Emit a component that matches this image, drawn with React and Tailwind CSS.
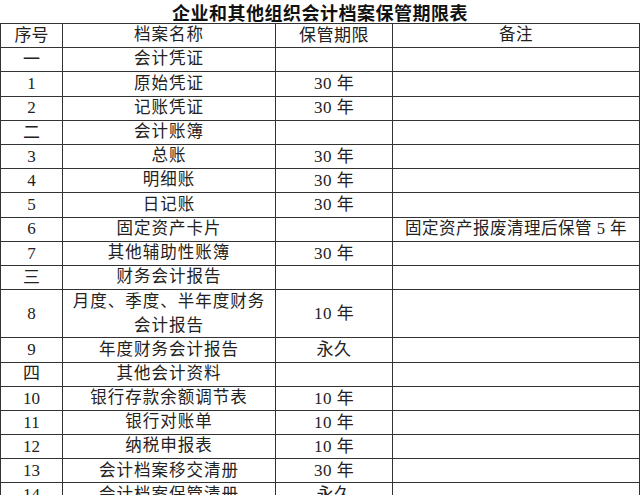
const rows = [
  { no: "序号", name: "档案名称", term: "保管期限", note: "备注" },
  { no: "一", name: "会计凭证", term: "", note: "" },
  { no: "1", name: "原始凭证", term: "30 年", note: "" },
  { no: "2", name: "记账凭证", term: "30 年", note: "" },
  { no: "二", name: "会计账簿", term: "", note: "" },
  { no: "3", name: "总账", term: "30 年", note: "" },
  { no: "4", name: "明细账", term: "30 年", note: "" },
  { no: "5", name: "日记账", term: "30 年", note: "" },
  { no: "6", name: "固定资产卡片", term: "", note: "固定资产报废清理后保管 5 年" },
  { no: "7", name: "其他辅助性账簿", term: "30 年", note: "" },
  { no: "三", name: "财务会计报告", term: "", note: "" },
  { no: "8", name: "月度、季度、半年度财务会计报告", term: "10 年", note: "", tall: true },
  { no: "9", name: "年度财务会计报告", term: "永久", note: "" },
  { no: "四", name: "其他会计资料", term: "", note: "" },
  { no: "10", name: "银行存款余额调节表", term: "10 年", note: "" },
  { no: "11", name: "银行对账单", term: "10 年", note: "" },
  { no: "12", name: "纳税申报表", term: "10 年", note: "" },
  { no: "13", name: "会计档案移交清册", term: "30 年", note: "" },
  { no: "14", name: "会计档案保管清册", term: "永久", note: "" },
  { no: "15", name: "会计档案销毁清册", term: "永久", note: "" },
];

export default function App() {
  return (
    <div className="w-[640px] h-[495px] overflow-hidden bg-white text-[#222] font-['Liberation_Serif','Noto_Sans_CJK_SC',serif]">
      <h1 className="h-[23px] flex items-center justify-center text-[18px] font-bold leading-none tracking-[0.5px] text-[#111] font-['Noto_Sans_CJK_SC',sans-serif]">
        企业和其他组织会计档案保管期限表
      </h1>
      <div className="grid grid-cols-[62px_213px_117px_247px] border-t border-l border-[#333] w-[640px]">
        {rows.map((r, i) => (
          <div key={i} className="contents">
            <div className={`${r.tall ? "h-[48.3px]" : "h-[24.2px]"} flex items-center justify-center border-r border-b border-[#333] text-[17px]`}>
              {r.no}
            </div>
            <div className={`${r.tall ? "h-[48.3px] px-[6px] leading-[24px]" : "h-[24.2px]"} flex items-center justify-center text-center border-r border-b border-[#333] text-[16.5px] tracking-[1px]`}>
              {r.name}
            </div>
            <div className={`${r.tall ? "h-[48.3px]" : "h-[24.2px]"} flex items-center justify-center border-r border-b border-[#333] text-[17px] tracking-[0.5px]`}>
              {r.term}
            </div>
            <div className={`${r.tall ? "h-[48.3px]" : "h-[24.2px]"} flex items-center justify-center border-r border-b border-[#333] text-[16.5px] tracking-[0.5px] whitespace-nowrap`}>
              {r.note}
            </div>
          </div>
        ))}
      </div>
    </div>
  );
}
